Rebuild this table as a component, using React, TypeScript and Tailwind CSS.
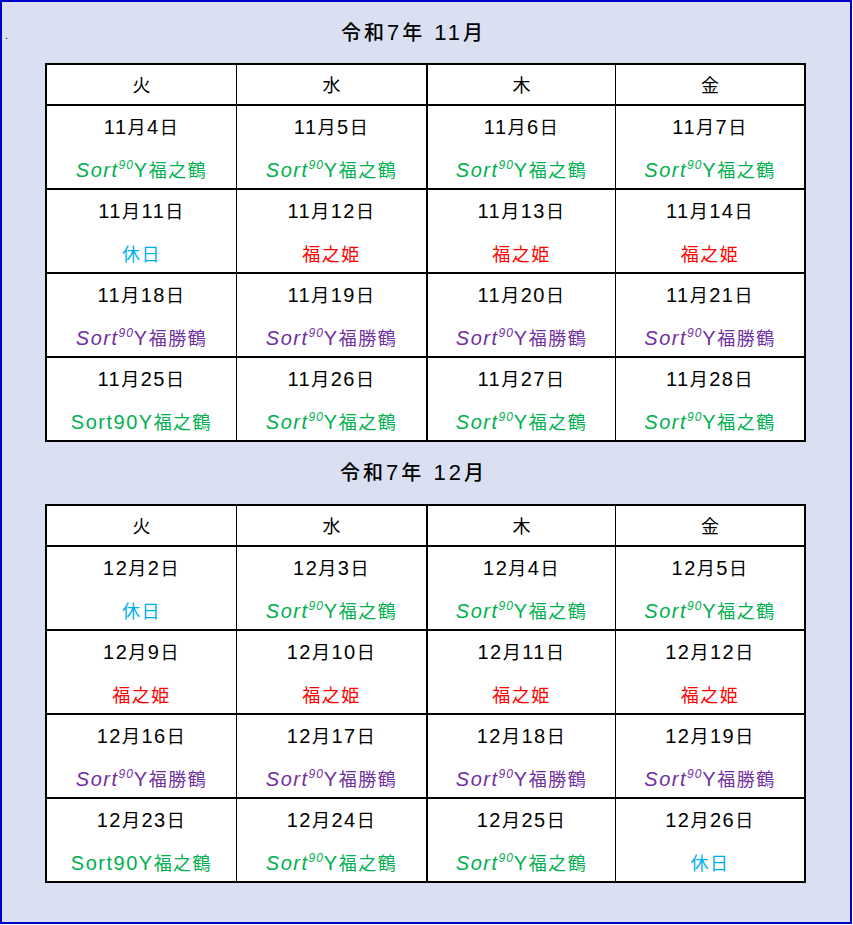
import React from "react";

type Kind = "g" | "gp" | "r" | "b" | "p";
type Cell = { d: string; k: Kind };

const FONT = { fontFamily: '"Liberation Sans", "Noto Sans CJK JP", sans-serif' };

function Mixed({ text, cjk = "text-[18px]" }: { text: string; cjk?: string }) {
  const parts = text.split(/([\u3000-\u9fff]+)/).filter((p) => p.length > 0);
  return (
    <>
      {parts.map((p, i) =>
        /[\u3000-\u9fff]/.test(p) ? (
          <span key={i} className={cjk}>
            {p}
          </span>
        ) : (
          <span key={i}>{p}</span>
        )
      )}
    </>
  );
}

function Label({ k }: { k: Kind }) {
  if (k === "b")
    return (
      <span className="text-[#00b0f0]">
        <Mixed text="休日" />
      </span>
    );
  if (k === "r")
    return (
      <span className="text-[#ff0000]">
        <Mixed text="福之姫" />
      </span>
    );
  if (k === "gp")
    return (
      <span className="text-[#00b050]">
        <Mixed text="Sort90Y福之鶴" />
      </span>
    );
  const color = k === "g" ? "text-[#00b050]" : "text-[#7030a0]";
  const tail = k === "g" ? "福之鶴" : "福勝鶴";
  return (
    <span className={color}>
      <span className="italic">Sort</span>
      <span className="italic relative -top-[8px] text-[12px] tracking-[1px]">90</span>
      <span>Y</span>
      <span className="text-[18px]">{tail}</span>
    </span>
  );
}

const widths = [
  "w-[189px]",
  "w-[190px] border-l border-black",
  "w-[189px] border-l-2 border-black",
  "w-[189px] border-l border-black",
];

function Table({ rows }: { rows: Cell[][] }) {
  const heads = ["火", "水", "木", "金"];
  return (
    <div className="ml-[43px] w-[761px] border-2 border-black bg-white">
      <div className="flex h-[41px] border-b-2 border-black">
        {heads.map((h, i) => (
          <div key={h} className={`${widths[i]} flex items-center justify-center pt-[3px] text-[18px] leading-[22px]`}>
            {h}
          </div>
        ))}
      </div>
      {rows.map((r, ri) => (
        <div key={ri} className={`flex ${ri < rows.length - 1 ? "h-[84px] border-b-2 border-black" : "h-[82px]"}`}>
          {r.map((c, ci) => (
            <div
              key={ci}
              className={`${widths[ci]} flex flex-col items-center pt-[10px] text-[20px] tracking-[1.5px]`}
            >
              <div className="leading-[22px] text-black whitespace-nowrap">
                <Mixed text={c.d} />
              </div>
              <div className="mt-[20px] leading-[22px] whitespace-nowrap">
                <Label k={c.k} />
              </div>
            </div>
          ))}
        </div>
      ))}
    </div>
  );
}

const nov: Cell[][] = [
  [
    { d: "11月4日", k: "g" },
    { d: "11月5日", k: "g" },
    { d: "11月6日", k: "g" },
    { d: "11月7日", k: "g" },
  ],
  [
    { d: "11月11日", k: "b" },
    { d: "11月12日", k: "r" },
    { d: "11月13日", k: "r" },
    { d: "11月14日", k: "r" },
  ],
  [
    { d: "11月18日", k: "p" },
    { d: "11月19日", k: "p" },
    { d: "11月20日", k: "p" },
    { d: "11月21日", k: "p" },
  ],
  [
    { d: "11月25日", k: "gp" },
    { d: "11月26日", k: "g" },
    { d: "11月27日", k: "g" },
    { d: "11月28日", k: "g" },
  ],
];

const dec: Cell[][] = [
  [
    { d: "12月2日", k: "b" },
    { d: "12月3日", k: "g" },
    { d: "12月4日", k: "g" },
    { d: "12月5日", k: "g" },
  ],
  [
    { d: "12月9日", k: "r" },
    { d: "12月10日", k: "r" },
    { d: "12月11日", k: "r" },
    { d: "12月12日", k: "r" },
  ],
  [
    { d: "12月16日", k: "p" },
    { d: "12月17日", k: "p" },
    { d: "12月18日", k: "p" },
    { d: "12月19日", k: "p" },
  ],
  [
    { d: "12月23日", k: "gp" },
    { d: "12月24日", k: "g" },
    { d: "12月25日", k: "g" },
    { d: "12月26日", k: "b" },
  ],
];

function Title({ text, h }: { text: string; h: string }) {
  return (
    <div
      className={`${h} flex items-center justify-center pr-[25px] text-[22px] leading-[26px] tracking-[3px] font-medium text-black whitespace-pre`}
    >
      <Mixed text={text} cjk="text-[20px]" />
    </div>
  );
}

export default function App() {
  return (
    <div className="bg-white w-[853px] h-[925px]" style={FONT}>
      <div className="relative w-[852px] h-[924px] border-2 border-[#0000cc] bg-[#dae0f2]">
        <span className="absolute left-[3px] top-[28px] text-[11px] leading-none text-black">.</span>
        <Title text="令和7年 11月" h="h-[61px]" />
        <Table rows={nov} />
        <Title text="令和7年 12月" h="h-[62px]" />
        <Table rows={dec} />
      </div>
    </div>
  );
}
